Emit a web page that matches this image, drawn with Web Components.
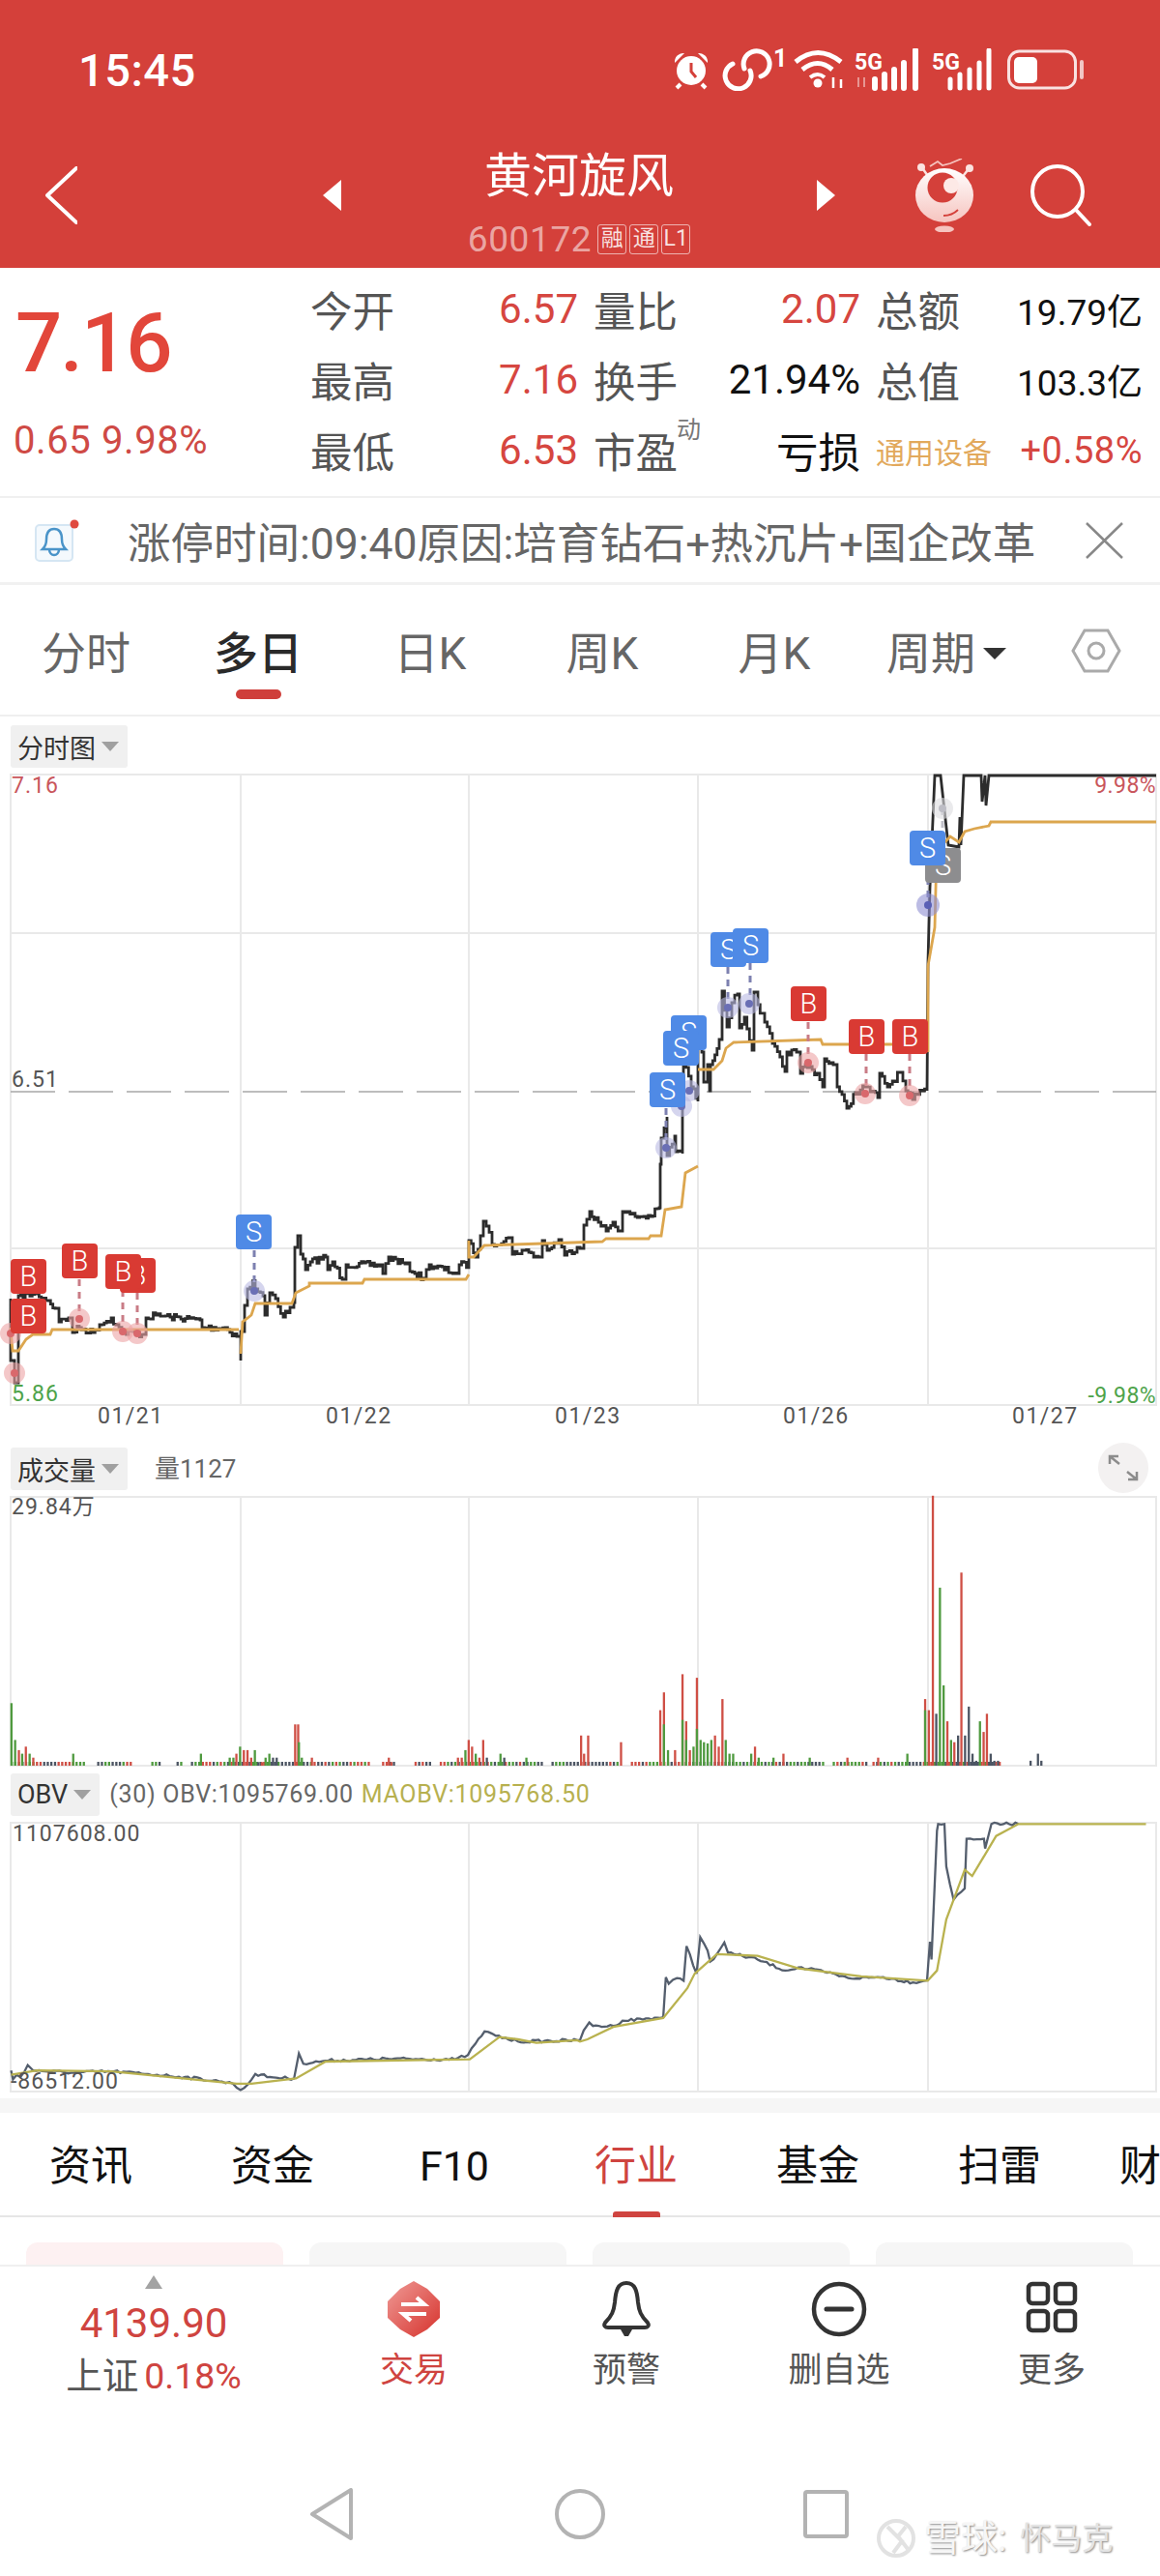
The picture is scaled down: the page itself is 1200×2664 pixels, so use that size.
<!DOCTYPE html>
<html lang="zh">
<head>
<meta charset="utf-8">
<title>黄河旋风</title>
<style>
html,body{margin:0;padding:0;background:#fff;}
body{width:1200px;height:2664px;overflow:hidden;font-family:Roboto,"Noto Sans CJK SC",sans-serif;}
</style>
</head>
<body>
<stock-header></stock-header>
<quote-panel></quote-panel>
<notice-bar>涨停时间:09:40原因:培育钻石+热沉片+国企改革</notice-bar>
<period-tabs></period-tabs>
<kline-chart></kline-chart>
<info-tabs></info-tabs>
<bottom-bar></bottom-bar>
<nav-keys></nav-keys>
<script>
const FONT = 'Roboto,"Noto Sans CJK SC",sans-serif';

class BaseEl extends HTMLElement {
	constructor() {
		super();
		this.attachShadow({ mode: 'open' });
		this.shadowRoot.innerHTML = this.markup();
	}
	markup() { return ''; }
}

class StockHeader extends BaseEl {
	markup() {
		return `
		<style>
		:host{display:block;height:277px;background:#d4403a;color:#fff;font-family:${FONT};}
		.status{height:144px;display:flex;align-items:center;justify-content:space-between;padding:0 77px 0 81px;box-sizing:border-box;}
		.time{font-size:47px;font-weight:500;letter-spacing:.5px;}
		.row{display:flex;height:133px;align-items:center;padding:0 0 18px 47px;box-sizing:border-box;}
		.mid{width:490px;display:flex;flex-direction:column;align-items:center;align-self:flex-start;margin-top:14px;}
		.title{font-size:49px;line-height:50px;}
		.code{display:flex;align-items:center;margin-top:22px;height:34px;color:rgba(255,255,255,.55);font-size:37px;letter-spacing:.6px;}
		.b{width:30px;height:31px;border:1.5px solid rgba(255,255,255,.6);box-sizing:border-box;border-radius:3px;font-size:23px;line-height:28px;text-align:center;margin-left:3px;color:rgba(255,255,255,.85);letter-spacing:0;}
		.b:first-of-type{margin-left:6px;}
		svg{display:block;flex:none;}
		</style>
		<div class="status">
			<span class="time">15:45</span>
			<svg width="427" height="44" viewBox="696 52 427 44" fill="none" stroke="#fff" font-family="Roboto,sans-serif">
				<circle cx="715" cy="75" r="15" fill="#fff" stroke="none"/>
				<path d="M715 67v9l5 6" stroke="#d4403a" stroke-width="3"/>
				<path d="M698 67a9 9 0 0 1 10-10zM732 67a9 9 0 0 0-10-10z" fill="#fff" stroke="none"/>
				<path d="M704 89l-4 4M726 89l4 4" stroke-width="4"/>
				<path d="M770 73A13.500 13.500 0 1 1 787 81" stroke-width="5" stroke-linecap="round"/>
				<path d="M776 75A13.500 13.500 0 1 1 758 68" stroke-width="5" stroke-linecap="round"/>
				<text x="800" y="71" font-size="25" font-weight="700" fill="#fff" stroke="none">1</text>
				<path d="M823 66q23-19 47 0" stroke-width="5"/><path d="M830 74q16-13 31 0" stroke-width="5"/><path d="M838 82q8-6 15 0" stroke-width="4"/>
				<circle cx="846" cy="88" r="4.500" fill="#fff" stroke="none"/>
				<path d="M862 82v11M870 84v9" stroke-width="2.500"/>
				<text x="884" y="74" font-size="23" font-weight="700" fill="#fff" stroke="none" textLength="29">5G</text>
				<path d="M888 82v10M894 82v10" stroke="rgba(255,255,255,.45)" stroke-width="2"/>
				<path d="M905 93v-9M915 93v-14M925 93v-19M935 93v-26M947 93v-39" stroke-width="6" stroke-linecap="round"/>
				<text x="964" y="74" font-size="23" font-weight="700" fill="#fff" stroke="none" textLength="29">5G</text>
				<path d="M983 93v-9M993 93v-14M1003 93v-19M1013 93v-26M1023 93v-39" stroke-width="5" stroke-linecap="round"/>
				<rect x="1043.5" y="55" width="69" height="38" rx="11" stroke="#fff" stroke-opacity=".85" stroke-width="3"/>
				<rect x="1049" y="61" width="24" height="27" rx="5" fill="#fff" stroke="none"/>
				<path d="M1119 66v16" stroke="#fff" stroke-opacity=".7" stroke-width="4" stroke-linecap="round"/>
			</svg>
		</div>
		<div class="row">
			<svg width="33" height="60" viewBox="0 0 33 60" fill="none" stroke="#fff" stroke-width="4" stroke-linecap="round" stroke-linejoin="round"><path d="M32 2 2 30l30 28"/></svg>
			<svg style="margin-left:253px" width="21" height="32" viewBox="0 0 21 32"><path d="M20 0v32L1 16z" fill="#fff"/></svg>
			<div class="mid">
				<div class="title">黄河旋风</div>
				<div class="code">600172<span class="b">融</span><span class="b">通</span><span class="b">L1</span></div>
			</div>
			<svg width="21" height="32" viewBox="0 0 21 32"><path d="M1 0v32l19-16z" fill="#fff"/></svg>
			<svg style="margin-left:82px" width="61" height="76" viewBox="947 163 61 76">
				<defs><linearGradient id="mg" x1="0" y1="0" x2="0" y2="1"><stop offset="0" stop-color="#fff"/><stop offset="1" stop-color="#f6c4bf"/></linearGradient></defs>
				<path d="M962 171l8-5 5 4 8-2 12-5" fill="none" stroke="#f6c4bf" stroke-width="1.800"/>
				<path d="M955 174l7 10M1001 175l-7 9" stroke="#fbe3e0" stroke-width="2.500"/>
				<circle cx="953" cy="172" r="4" fill="#fbe3e0"/><circle cx="1003" cy="173" r="4" fill="#fbe3e0"/>
				<ellipse cx="977" cy="201" rx="30" ry="28" fill="url(#mg)"/>
				<circle cx="975" cy="193" r="15.500" fill="#d4403a"/>
				<circle cx="984" cy="191" r="8" fill="#fde9e6"/>
				<path d="M976 222q9 0 15-6" fill="none" stroke="#d4403a" stroke-width="1.800"/>
				<ellipse cx="977" cy="236" rx="10" ry="3.500" fill="#f6c4bf"/>
			</svg>
			<svg style="margin-left:58px" width="63" height="64" viewBox="0 0 63 64" fill="none" stroke="#fff" stroke-width="4" stroke-linecap="round"><circle cx="28" cy="28" r="26"/><path d="M47 47l14 15"/></svg>
		</div>`;
	}
}

class QuotePanel extends BaseEl {
	markup() {
		return `
		<style>
		:host{display:flex;height:238px;box-sizing:border-box;border-bottom:2px solid #f0f0f0;font-family:${FONT};color:#555;}
		.left{width:321px;flex:none;padding-left:14px;box-sizing:border-box;color:#e2463a;}
		.price{font-size:85px;line-height:85px;margin-top:36px;font-weight:500;letter-spacing:-2px;padding-left:2px;}
		.chg{font-size:40px;line-height:40px;margin-top:38px;color:#cf4a45;letter-spacing:.6px;white-space:nowrap;}
		.grid{display:grid;grid-template-columns:84px 193px 100px 192px 101px 191px;grid-auto-rows:73px;padding-top:6px;align-items:center;font-size:42px;}
		.lb{white-space:nowrap;position:relative;font-size:43.500px;}
		.pl{padding-left:16px;}
		.v{text-align:right;}
		.r{color:#d64640;}
		.k{color:#111;}
		.s{font-size:37px;}
		sup{position:absolute;left:102px;top:-2px;font-size:25px;line-height:25px;color:#777;}
		.ind{grid-column:span 2;display:flex;justify-content:space-between;align-items:center;padding-left:16px;}
		.gold{font-size:30px;color:#e2a95c;}
		.up{font-size:38px;color:#d64640;letter-spacing:.5px;}
		</style>
		<div class="left"><div class="price">7.16</div><div class="chg">0.65 9.98%</div></div>
		<div class="grid">
			<span class="lb">今开</span><span class="v r">6.57</span><span class="lb pl">量比</span><span class="v r">2.07</span><span class="lb pl">总额</span><span class="v k s">19.79亿</span>
			<span class="lb">最高</span><span class="v r">7.16</span><span class="lb pl">换手</span><span class="v k">21.94%</span><span class="lb pl">总值</span><span class="v k s">103.3亿</span>
			<span class="lb">最低</span><span class="v r">6.53</span><span class="lb pl">市盈<sup>动</sup></span><span class="v k" style="font-size:43.500px">亏损</span><span class="ind"><span class="gold">通用设备</span><span class="up">+0.58%</span></span>
		</div>`;
	}
}

class NoticeBar extends BaseEl {
	markup() {
		return `
		<style>
		:host{display:flex;align-items:center;height:90px;box-sizing:border-box;border-bottom:3px solid #f1f1f1;font-family:${FONT};color:#666;position:relative;}
		svg{display:block;flex:none;}
		.t{font-size:44.500px;margin-left:49px;width:990px;white-space:nowrap;flex:none;}
		</style>
		<svg style="margin-left:36px" width="47" height="44" viewBox="0 0 47 44" fill="none">
			<rect x="1" y="6" width="38" height="37" rx="4" stroke="#d5e6f3" stroke-width="2" fill="#f4f9fd"/>
			<path d="M20 10c-6 0-8 5-8 11 0 5-2 8-4 10h24c-2-2-4-5-4-10 0-6-2-11-8-11z" stroke="#4a94c9" stroke-width="2.500"/>
			<path d="M15 31c0 8 10 8 10 0" stroke="#4a94c9" stroke-width="2.500"/>
			<circle cx="41" cy="5" r="4.500" fill="#df4a40"/>
		</svg>
		<span class="t"><slot></slot></span>
		<svg style="margin-left:0" width="41" height="38" viewBox="0 0 41 38" fill="none" stroke="#888" stroke-width="2.500"><path d="M2 1l37 36M39 1L2 37"/></svg>`;
	}
}

class PeriodTabs extends BaseEl {
	markup() {
		const tabs = ['分时', '多日', '日K', '周K', '月K', '周期'];
		return `
		<style>
		:host{display:grid;grid-template-columns:repeat(6,178px) 1fr;padding:48px 0 0 0;height:136px;box-sizing:border-box;border-bottom:2px solid #efefef;font-family:${FONT};color:#666;}
		.tab{display:flex;flex-direction:column;align-items:center;font-size:46px;line-height:46px;}
		.on{color:#2a2a2a;font-weight:500;}
		i{display:block;width:47px;height:10px;border-radius:5px;background:#cf3f3b;margin-top:14px;}
		.tx{display:flex;align-items:center;gap:8px;}
		.car{width:0;height:0;border-left:12px solid transparent;border-right:12px solid transparent;border-top:12px solid #333;}
		svg{display:block;justify-self:center;margin-top:-4px;}
		</style>
		${tabs.map((t, i) => `<div class="tab ${i == 1 ? 'on' : ''}"><span class="tx">${t}${i == 5 ? '<b class="car"></b>' : ''}</span>${i == 1 ? '<i></i>' : ''}</div>`).join('')}
		<svg width="52" height="48" viewBox="0 0 52 48" fill="none" stroke="#aaa" stroke-width="3"><path d="M14 3h24l12 21-12 21H14L2 24z"/><circle cx="26" cy="24" r="8"/></svg>`;
	}
}

class ChartPane extends BaseEl {
	markup() {
		return `
		<style>
		:host{display:block;}
		.head{display:flex;align-items:flex-start;height:var(--head,60px);padding:var(--pad,9px) 0 0 11px;box-sizing:border-box;}
		.plot{position:relative;height:var(--plot,300px);}
		</style>
		<div class="head"><slot name="head"></slot></div>
		<div class="plot"><slot></slot></div>
		<slot name="foot"></slot>`;
	}
}

class ChartPill extends BaseEl {
	markup() {
		return `
		<style>
		:host{display:inline-flex;align-items:center;height:44px;padding:0 9px 0 7px;background:#f0f0f0;border-radius:3px;font-size:27px;color:#333;flex:none;}
		b{display:block;width:0;height:0;border-left:9px solid transparent;border-right:9px solid transparent;border-top:10px solid #a0a0a0;margin-left:6px;}
		</style>
		<slot></slot><b></b>`;
	}
}

class TradeTag extends BaseEl {
	markup() {
		return `
		<style>
		:host{position:absolute;display:block;width:37px;height:36px;border-radius:4px;text-align:center;font-size:29px;line-height:36px;color:#fff;font-weight:300;background:var(--bg,#d93a33);}
		</style>
		<slot></slot>`;
	}
}

// seeded jitter so the price line comes out the same each run
let seed = 7;
function rnd() { seed = (seed * 16807) % 2147483647; return seed / 2147483647; }

function stepLine(pts, amp) {
	let d = 'M' + pts[0][0] + ' ' + pts[0][1];
	for (let i = 1; i < pts.length; i++) {
		const [x0, y0] = pts[i - 1], [x1, y1] = pts[i];
		const n = Math.floor((x1 - x0) / 2.2);
		for (let k = 1; k < n; k++) {
			const x = x0 + (x1 - x0) * k / n;
			const y = y0 + (y1 - y0) * k / n + (rnd() - .5) * amp;
			d += 'H' + x.toFixed(1) + 'V' + y.toFixed(1);
		}
		d += 'H' + x1 + 'V' + y1;
	}
	return d;
}
const line = pts => 'M' + pts.map(p => p[0].toFixed(1) + ' ' + p[1].toFixed(1)).join('L');

// small noise along a line, for the raw OBV series
function wiggle(pts, amp) {
	const out = [pts[0]];
	for (let i = 1; i < pts.length; i++) {
		const [x0, y0] = pts[i - 1], [x1, y1] = pts[i];
		const n = Math.floor((x1 - x0) / 3);
		for (let k = 1; k < n; k++) out.push([x0 + (x1 - x0) * k / n, y0 + (y1 - y0) * k / n + (rnd() - .5) * amp]);
		out.push(pts[i]);
	}
	return out;
}

const PRICE = [[11,1343],[11,1407],[15,1407],[15,1430],[19,1400],[19,1340],[38,1338],[50,1345],[57,1353],[61,1367],[71,1363],[75,1378],[82,1373],[96,1378],[103,1370],[115,1363],[120,1370],[126,1377],[149,1380],[151,1363],[161,1360],[176,1362],[207,1365],[209,1373],[233,1373],[245,1382],[249,1407],[249,1377],[253,1350],[256,1333],[264,1323],[264,1333],[272,1340],[274,1360],[279,1337],[285,1343],[293,1362],[300,1352],[304,1347],[305,1290],[308,1278],[311,1297],[316,1313],[321,1305],[337,1300],[339,1313],[344,1305],[354,1323],[358,1308],[394,1308],[396,1317],[402,1300],[419,1307],[429,1317],[438,1322],[444,1308],[473,1317],[475,1308],[485,1308],[485,1283],[492,1300],[497,1278],[500,1263],[503,1268],[509,1287],[526,1280],[530,1297],[540,1293],[547,1295],[557,1300],[561,1283],[566,1293],[578,1282],[584,1298],[597,1290],[600,1291],[604,1267],[610,1253],[619,1264],[627,1273],[634,1264],[642,1273],[644,1253],[657,1258],[673,1258],[682,1249],[683,1204],[684,1177],[690,1155],[690,1195],[698,1175],[699,1191],[706,1193],[706,1133],[707,1092],[715,1124],[722,1139],[722,1070],[726,1088],[728,1119],[732,1101],[734,1128],[735,1101],[744,1075],[747,1025],[752,1062],[757,1037],[763,1028],[765,1063],[770,1052],[778,1086],[780,1026],[784,1039],[791,1057],[799,1079],[812,1108],[814,1088],[824,1088],[828,1110],[833,1101],[845,1110],[851,1124],[853,1095],[862,1101],[866,1124],[876,1146],[885,1130],[895,1124],[908,1135],[910,1110],[918,1124],[931,1109],[937,1128],[944,1137],[954,1128],[959,1128]];
const PRICE_END = 'L960 994L962 918L967 802L973 802L977 838L981 874L992 876L993 845L994 874L997 802L1015 802L1016 829L1019 802L1020 833L1023 802L1196 802';
const AVG = [
	[[11,1373],[13,1397],[19,1397],[27,1385],[34,1380],[52,1380],[54,1375],[247,1375]],
	[[249,1400],[251,1367],[260,1360],[264,1348],[302,1348],[306,1337],[320,1330],[320,1327],[375,1327],[377,1323],[482,1323],[485,1318]],
	[[485,1283],[485,1300],[490,1300],[501,1288],[623,1284],[627,1281],[671,1281],[673,1278],[684,1278],[688,1251],[705,1248],[709,1213],[722,1206]],
	[[722,1106],[738,1106],[747,1097],[751,1084],[759,1078],[849,1075],[851,1080],[960,1080]],
	[[960,1088],[960,999],[967,959],[969,880],[983,865],[992,871],[998,860],[1008,857],[1023,854],[1025,850],[1196,850]]
];
// tall volume bars: x in page px, height px, colour key
const R = '#cf4f45', G = '#4f9a3f', K = '#4c5563';
const VZ = (list, off) => list.map(([x, top, c]) => [off + x / 2.613, (753 - top) / 2.178, c]);
const VOL = VZ([[28,612,G],[38,695,G],[48,718,R],[57,726,G],[67,710,R],[77,726,G],[87,735,R],[195,726,G],[540,726,G],[618,735,G],[628,735,G],[636,726,R],[646,710,G],[656,718,R],[666,718,R],[676,735,R],[686,718,G],[695,745,K],[705,745,R],[715,735,G],[725,726,G],[735,735,K],[745,735,K],[795,660,R],[803,660,R],[805,700,G],[813,735,G],[840,735,R],[1048,735,R],[1055,745,R],[1235,735,R],[1245,735,R],[1255,718,G],[1264,695,R],[1273,710,R],[1283,726,G],[1293,735,R],[1303,695,R],[1313,735,K],[1350,726,G],[1360,735,K],[1420,735,G]], 0)
	.concat(VZ([[0,685,R],[8,726,R],[19,685,R],[108,700,R],[214,628,R],[224,588,R],[224,660,G],[235,718,G],[254,718,R],[274,547,R],[274,650,G],[284,653,R],[284,695,G],[294,718,R],[304,710,G],[313,555,R],[313,670,G],[323,695,G],[332,700,G],[342,703,G],[352,695,G],[362,685,R],[372,710,R],[382,603,R],[391,695,G],[401,726,G],[411,726,G],[460,726,G],[470,710,R],[480,735,G],[520,735,G],[547,726,R],[618,735,G],[720,735,R],[803,735,R],[882,726,G],[930,603,R],[930,628,G],[940,628,R],[951,145,R],[960,636,K],[970,352,G],[980,572,G],[990,653,R],[1000,695,G],[1009,700,R],[1019,685,K],[1028,318,R],[1038,685,K],[1048,620,K],[1058,726,K],[1068,742,K],[1078,653,G],[1088,677,R],[1097,636,R],[1107,726,K],[1117,742,K],[1127,742,K],[1215,742,K],[1235,726,K],[1244,742,K]], 600));
const GAPS = [[88,99],[136,153],[166,180],[190,195],[381,393],[407,426],[444,453],[561,568],[640,650],[853,858],[897,902],[1034,1196]];

function volumeBars() {
	let out = '';
	for (let x = 11; x < 1034; x += 3.73) {
		if (GAPS.some(g => x >= g[0] && x <= g[1])) continue;
		const c = [K, K, R, G][Math.floor(rnd() * 4)];
		out += `<rect x="${x.toFixed(1)}" y="${1826 - 4}" width="2.300" height="4" fill="${c}"/>`;
	}
	VOL.forEach(([x, h, c]) => { out += `<rect x="${x.toFixed(1)}" y="${(1826 - h).toFixed(1)}" width="2.300" height="${h.toFixed(1)}" fill="${c}"/>`; });
	return out;
}

const zo = (list, off) => list.map(([x, y]) => [off + x / 2.613, 1480 + y / 2.178]);
const OBV = zo([[30,1440],[35,1460],[45,1450],[55,1455],[75,1428],[90,1440],[200,1445],[300,1442],[400,1448],[500,1455],[600,1465],[630,1470],[650,1484],[670,1472],[690,1448],[730,1455],[795,1458],[808,1402],[820,1425],[880,1418],[1050,1414],[1230,1415],[1265,1405],[1285,1380],[1310,1352],[1340,1362],[1400,1375],[1560,1372]], 0)
	.concat(zo([[0,1372],[10,1350],[25,1332],[35,1340],[90,1340],[115,1328],[225,1320],[232,1230],[240,1245],[262,1232],[280,1238],[288,1160],[315,1222],[325,1140],[345,1170],[352,1195],[370,1178],[390,1152],[400,1175],[480,1190],[555,1215],[590,1208],[660,1218],[725,1232],[820,1230],[900,1242],[938,1237],[946,1150],[950,1190],[965,900],[968,885],[985,885],[990,980],[1010,1055],[1040,1030],[1045,918],[1092,918],[1095,940],[1112,885],[1185,885]], 600));
const MAOBV = zo([[30,1450],[100,1440],[300,1442],[640,1470],[680,1470],[800,1458],[880,1420],[1270,1415],[1350,1365],[1400,1370],[1450,1378],[1560,1372]], 0)
	.concat(zo([[0,1375],[20,1370],[90,1342],[225,1322],[290,1255],[310,1222],[370,1178],[480,1182],[590,1210],[760,1228],[940,1238],[965,1215],[990,1100],[1040,988],[1060,1002],[1125,912],[1185,885],[1530,885]], 600));

function grid(y0, y1, rows) {
	let s = `<g stroke="#e9e9e9" stroke-width="2" fill="none"><rect x="11" y="${y0}" width="1185" height="${y1 - y0}"/>`;
	[249, 485, 722, 960].forEach(x => { s += `<path d="M${x} ${y0}V${y1}"/>`; });
	rows.forEach(y => { s += `<path d="M11 ${y}H1196"/>`; });
	return s + '</g>';
}

// tag: x, y, letter, colour. dot: x, y, kind
const BLUE = '#4f8ae6', RED = '#d93a33', GRAY = '#8d8d8f';
const TAGS = [[11,1302,'B',RED],[64,1286,'B',RED],[124,1301,'B',RED],[109,1297,'B',RED],[11,1343,'B',RED],[244,1256,'S',BLUE],[694,1050,'S',BLUE],[672,1109,'S',BLUE],[686,1066,'S',BLUE],[735,964,'S',BLUE],[758,960,'S',BLUE],[818,1020,'B',RED],[878,1054,'B',RED],[923,1054,'B',RED],[957,877,'S',GRAY],[941,859,'S',BLUE]];
const DOTS = [[11,1379,'p'],[15,1420,'p'],[82,1364,'p'],[127,1377,'p'],[142,1379,'p'],[263,1335,'b'],[689,1187,'b'],[705,1144,'b'],[713,1128,'b'],[753,1042,'b'],[775,1038,'b'],[836,1099,'p'],[895,1131,'p'],[941,1133,'p'],[960,936,'B'],[975,836,'g']];
const STEMS = [[82,1323,1364,'p'],[127,1334,1377,'p'],[142,1337,1379,'p'],[263,1293,1335,'b'],[689,1146,1187,'b'],[753,1000,1042,'b'],[776,996,1038,'b'],[836,1057,1099,'p'],[896,1090,1131,'p'],[941,1090,1133,'p'],[960,895,936,'b'],[975,836,877,'g']];
const DOTC = { p: ['#eda3a5', '#d9686c'], b: ['#b9b9e2', '#6a6fb5'], B: ['#8f8fd2', '#5a60b5'], g: ['#dcdce0', '#bdbdc5'] };

function markers() {
	let s = '';
	STEMS.forEach(([x, a, b, k]) => { s += `<path d="M${x} ${a}V${b}" stroke="${k == 'p' ? '#c97c86' : k == 'g' ? '#c0c0c8' : '#7d80b0'}" stroke-width="3" stroke-dasharray="7 6"/>`; });
	DOTS.forEach(([x, y, k]) => { const r = k == 'B' ? 12 : 11; s += `<circle cx="${x}" cy="${y}" r="${r}" fill="${DOTC[k][0]}" fill-opacity=".6"/><circle cx="${x}" cy="${y}" r="4" fill="${DOTC[k][1]}"/>`; });
	return s;
}

class KlineChart extends BaseEl {
	markup() {
		const tags = TAGS.map(([x, y, l, c]) => `<trade-tag style="left:${x}px;top:${y - 801}px;--bg:${c}">${l}</trade-tag>`).join('');
		return `
		<style>
		:host{display:block;font-family:${FONT};}
		svg{position:absolute;left:0;top:0;overflow:visible;display:block;}
		.lb{position:absolute;font-size:23px;line-height:26px;letter-spacing:1px;color:#555;white-space:nowrap;}
		.ax{height:44px;position:relative;font-size:23px;color:#555;letter-spacing:1.5px;}
		.ax span{position:absolute;top:-1px;line-height:26px;}
		.leg{font-size:25px;line-height:44px;color:#666;letter-spacing:.7px;white-space:nowrap;margin-left:28px;}
		.gold{color:#b7b04f;margin-left:8px;}
		.exp{position:absolute;right:12px;top:-56px;width:52px;height:52px;border-radius:50%;background:#f3f1f1;display:flex;align-items:center;justify-content:center;}
		.exp svg{position:static;}
		</style>
		<chart-pane style="--head:60px;--pad:9px;--plot:652px">
			<chart-pill slot="head">分时图</chart-pill>
			<svg width="1200" height="652" viewBox="0 801 1200 652" fill="none">
				${grid(801, 1453, [965, 1291])}
				<path d="M11 1129H1196" stroke="#a8a8a8" stroke-width="1.500" stroke-dasharray="46 14"/>
				<path d="${stepLine(PRICE, 7)}${PRICE_END}" stroke="#2c2c2c" stroke-width="2.800" stroke-linejoin="miter"/>
				${AVG.map(a => `<path d="${line(a)}" stroke="#dca64e" stroke-width="2.800"/>`).join('')}
				${markers()}
			</svg>
			<span class="lb" style="left:12px;top:-1px;color:#c9565c">7.16</span>
			<span class="lb" style="right:4px;top:-1px;color:#c9565c;letter-spacing:.4px">9.98%</span>
			<span class="lb" style="left:12px;top:303px">6.51</span>
			<span class="lb" style="left:12px;top:628px;color:#4ea34a">5.86</span>
			<span class="lb" style="right:4px;top:630px;color:#4ea34a;letter-spacing:.4px">-9.98%</span>
			${tags}
			<div slot="foot" class="ax">
				<span style="left:101px">01/21</span><span style="left:337px">01/22</span><span style="left:574px">01/23</span><span style="left:810px">01/26</span><span style="left:1047px">01/27</span>
			</div>
		</chart-pane>
		<chart-pane style="--head:51px;--pad:0px;--plot:278px">
			<chart-pill slot="head">成交量</chart-pill>
			<span slot="head" class="leg" style="font-size:26px;letter-spacing:0">量1127</span>
			<svg width="1200" height="278" viewBox="0 1548 1200 278" fill="none">
				${grid(1548, 1826, [])}
				${volumeBars()}
			</svg>
			<span class="lb" style="left:12px;top:-2px">29.84万</span>
			<div class="exp"><svg width="32" height="28" viewBox="0 0 32 28" fill="none" stroke="#8c8c8c" stroke-width="2.500"><path d="M2 10V2h9M2 2l10 8M30 18v8h-9M30 26l-10-8"/></svg></div>
		</chart-pane>
		<chart-pane style="--head:59px;--pad:8px;--plot:278px">
			<chart-pill slot="head">OBV</chart-pill>
			<span slot="head" class="leg" style="margin-left:10px">(30) OBV:1095769.00<span class="gold">MAOBV:1095768.50</span></span>
			<svg width="1200" height="278" viewBox="0 1885 1200 278" fill="none">
				${grid(1885, 2163, [])}
				<path d="${line(wiggle(OBV, 3))}" stroke="#545e6d" stroke-width="2.300"/>
				<path d="${line(MAOBV)}" stroke="#b9b24f" stroke-width="2.300"/>
			</svg>
			<span class="lb" style="left:13px;top:-1px">1107608.00</span>
			<span class="lb" style="left:11px;top:255px">-86512.00</span>
		</chart-pane>`;
	}
}

class InfoTabs extends BaseEl {
	markup() {
		const tabs = ['资讯', '资金', 'F10', '行业', '基金', '扫雷'];
		return `
		<style>
		:host{display:block;font-family:${FONT};overflow:hidden;position:relative;}
		.band{height:7px;}
		.gray{height:15px;background:#f6f6f6;}
		.row{display:grid;grid-template-columns:repeat(6,188px) 1fr;height:108px;box-sizing:border-box;border-bottom:2px solid #e6e6e6;color:#111;font-size:43px;}
		.row div{display:flex;flex-direction:column;align-items:center;padding-top:32px;line-height:46px;position:relative;}
		.on{color:#cf4440;}
		i{position:absolute;bottom:-2px;width:49px;height:6px;border-radius:3px 3px 0 0;background:#cf4440;}
		.last{margin-left:30px;align-items:flex-start !important;}
		.cards{display:flex;height:49px;align-items:flex-end;padding-left:27px;gap:27px;}
		.cards b{display:block;width:266px;height:23px;background:#f6f6f6;border-radius:12px 12px 0 0;}
		.cards b:first-child{background:#fdf1f2;}
		</style>
		<div class="band"></div><div class="gray"></div>
		<div class="row">${tabs.map((t, i) => `<div class="${i == 3 ? 'on' : ''}">${t}${i == 3 ? '<i></i>' : ''}</div>`).join('')}<div class="last">财</div></div>
		<div class="cards"><b></b><b></b><b></b><b></b></div>`;
	}
}

class BottomBar extends BaseEl {
	markup() {
		return `
		<style>
		:host{display:grid;grid-template-columns:318px repeat(4,220px);height:198px;box-sizing:border-box;border-top:2px solid #f0f0f0;font-family:${FONT};color:#555;text-align:center;}
		.idx{display:flex;flex-direction:column;align-items:center;}
		.tri{width:0;height:0;border-left:9px solid transparent;border-right:9px solid transparent;border-bottom:14px solid #a3a3a3;margin-top:9px;}
		.v{font-size:42px;line-height:46px;color:#cf4440;margin-top:13px;}
		.s{font-size:37.500px;line-height:42px;margin-top:10px;white-space:nowrap;}
		.s em{font-style:normal;color:#cf4440;margin-left:6px;}
		.it{display:flex;flex-direction:column;align-items:center;font-size:35px;line-height:40px;padding-top:15px;}
		.it svg{display:block;margin-bottom:15px;}
		.red{color:#cf4440;}
		</style>
		<div class="idx"><b class="tri"></b><div class="v">4139.90</div><div class="s">上证<em>0.18%</em></div></div>
		<div class="it red">
			<svg width="54" height="58" viewBox="0 0 54 58">
				<defs><linearGradient id="tg" x1="0" y1="0" x2="1" y2="1"><stop offset="0" stop-color="#ef9a96"/><stop offset="1" stop-color="#d6322c"/></linearGradient></defs>
				<path d="M27 0l14 8 13 13v17L41 50 27 58 13 50 0 38V21L13 8z" fill="url(#tg)"/>
				<path d="M14 24h24l-8-7M40 34H16l8 7" fill="none" stroke="#fff" stroke-width="4"/>
			</svg>交易</div>
		<div class="it">
			<svg width="50" height="58" viewBox="0 0 50 58" fill="none" stroke="#333" stroke-width="4"><path d="M25 2c-9 0-11 8-12 20-1 9-3 14-10 21-2 3 0 5 3 5h38c3 0 5-2 3-5-7-7-9-12-10-21C36 10 34 2 25 2z"/><path d="M19 50h12l-4 7h-4z" fill="#333" stroke="none"/></svg>预警</div>
		<div class="it">
			<svg width="58" height="58" viewBox="0 0 58 58" fill="none" stroke="#333" stroke-width="4.500"><circle cx="29" cy="29" r="26"/><path d="M16 29h26" stroke-width="5" stroke-linecap="round"/></svg>删自选</div>
		<div class="it">
			<svg width="54" height="54" style="margin-bottom:19px" viewBox="0 0 54 54" fill="none" stroke="#333" stroke-width="4.500"><rect x="3" y="3" width="20" height="20" rx="4"/><rect x="31" y="3" width="20" height="20" rx="4"/><rect x="3" y="31" width="20" height="20" rx="4"/><rect x="31" y="31" width="20" height="20" rx="4"/></svg>更多</div>`;
	}
}

class NavKeys extends BaseEl {
	markup() {
		return `
		<style>
		:host{display:flex;justify-content:center;gap:203px;height:124px;padding-top:33px;box-sizing:border-box;position:relative;font-family:${FONT};}
		svg{display:block;}
		.wm{position:absolute;left:907px;top:63px;display:flex;align-items:center;color:#f6f6f6;font-size:38px;line-height:44px;text-shadow:1px 1px 2px #8a8a8a;white-space:nowrap;}
		.wm svg{margin-right:9px;}
		.wm span{font-size:32px;color:#e4e4e4;margin-left:14px;}
		</style>
		<svg width="52" height="54" viewBox="0 0 52 54" fill="none" stroke="#b3b3b3" stroke-width="4" stroke-linejoin="round"><path d="M44 2v50L4 27z"/></svg>
		<svg width="52" height="54" viewBox="0 0 52 54" fill="none" stroke="#b3b3b3" stroke-width="4"><circle cx="26" cy="27" r="24"/></svg>
		<svg width="52" height="54" viewBox="0 0 52 54" fill="none" stroke="#b3b3b3" stroke-width="4"><rect x="4" y="4" width="43" height="46" rx="2"/></svg>
		<div class="wm">
			<svg width="40" height="42" viewBox="0 0 40 42" fill="none" stroke="#e2e2e2" stroke-width="4"><circle cx="20" cy="21" r="18"/><path d="M11 9l15 15-9 12M30 9l-8 10 10 13"/></svg>
			雪球:<span>怀马克</span>
		</div>`;
	}
}

customElements.define('stock-header', StockHeader);
customElements.define('quote-panel', QuotePanel);
customElements.define('notice-bar', NoticeBar);
customElements.define('period-tabs', PeriodTabs);
customElements.define('chart-pane', ChartPane);
customElements.define('chart-pill', ChartPill);
customElements.define('trade-tag', TradeTag);
customElements.define('kline-chart', KlineChart);
customElements.define('info-tabs', InfoTabs);
customElements.define('bottom-bar', BottomBar);
customElements.define('nav-keys', NavKeys);
</script>
</body>
</html>
